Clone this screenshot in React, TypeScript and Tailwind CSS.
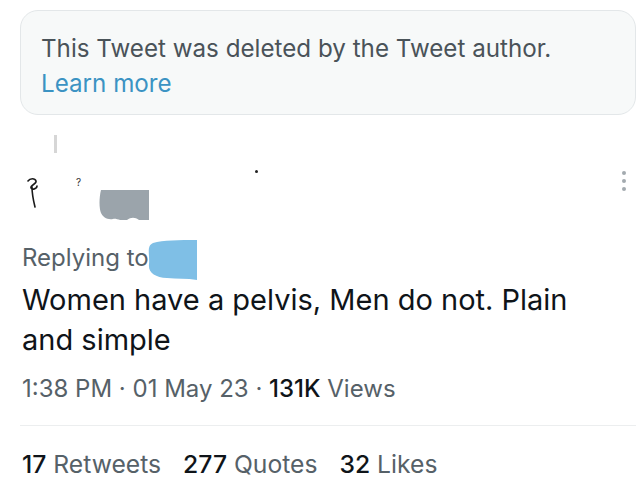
import React from 'react';

const Scribble = () => (
  <svg width="22" height="34" viewBox="0 0 22 34" fill="none" className="mt-[22px]">
    <path d="M4 6c2-3 7-3 8 0s-6 4-5 7c1 2 6 1 6-2M8 12c0 6 1 12 3 20" stroke="#1a1a1a" strokeWidth="1.6" strokeLinecap="round" />
  </svg>
);

const GrayBlob = () => (
  <svg width="50" height="30" viewBox="0 0 50 30">
    <path d="M2 0H50V30H40c-4-3-8-3-12 0-5 2-10-2-14-1-6 1-10-2-12-6C0 18 0 8 2 0Z" fill="#9ba4ab" />
  </svg>
);

const BlueBlob = () => (
  <svg width="52" height="40" viewBox="0 0 52 40" className="-ml-[4px] -mt-[2px]">
    <path d="M8 3C18 0 34 0 52 0V40C42 38 32 39 22 38 10 37 3 33 4 24 5 15 1 6 8 3Z" fill="#7fbfe6" />
  </svg>
);

export default function App() {
  return (
    <div className="w-[640px] h-[486px] overflow-hidden bg-white font-['Inter',sans-serif]">
      <div className="pl-5 pr-1 pt-[10px]">
        <div className="h-[105px] rounded-[18px] border border-[#e3e7e9] bg-[#f7f9f9] px-5 pt-[20px]">
          <p className="text-[24.2px] leading-[35px] text-[#4a5359]">This Tweet was deleted by the Tweet author.</p>
          <p className="text-[24.2px] leading-[35px] text-[#3b93c3]">Learn more</p>
        </div>
      </div>

      {/* redacted author row */}
      <div className="flex h-[127px] items-start pl-[24px] pr-[14px]">
        <div className="flex flex-col pt-[20px]">
          <div className="ml-[30px] h-[18px] w-[3px] bg-[#d6d6d6]" />
          <div className="flex items-start">
            <Scribble />
            <span className="ml-[30px] mt-[22px] text-[10px] text-[#333]">?</span>
            <div className="ml-[18px] mt-[37px]">
              <GrayBlob />
            </div>
            <div className="ml-[106px] mt-[17px] h-[3px] w-[3px] rounded-full bg-[#222]" />
          </div>
        </div>
        <div className="ml-auto mt-[56px] flex flex-col gap-[4px]">
          <span className="h-[4px] w-[4px] rounded-full bg-[#a3aaaf]" />
          <span className="h-[4px] w-[4px] rounded-full bg-[#a3aaaf]" />
          <span className="h-[4px] w-[4px] rounded-full bg-[#a3aaaf]" />
        </div>
      </div>

      <div className="px-[22px]">
        <div className="flex items-start">
          <span className="text-[24px] leading-[32px] text-[#566168]">Replying to</span>
          <BlueBlob />
        </div>
        <p className="mt-0 text-[29px] leading-[40px] text-[#0f1419]">
          Women have a pelvis, Men do not. Plain and simple
        </p>
        <p className="mt-[13px] text-[24px] leading-[32px] text-[#566168]">
          1:38 PM · 01 May 23 · <span className="font-medium text-[#0f1419]">131K</span> Views
        </p>
      </div>

      <div className="ml-5 mr-1 mt-[20px] border-t border-[#eceeef]" />

      <div className="flex gap-[22px] px-[22px] pt-[22px] text-[24.7px] leading-[32px] text-[#566168]">
        <span><span className="font-medium text-[#0f1419]">17</span> Retweets</span>
        <span><span className="font-medium text-[#0f1419]">277</span> Quotes</span>
        <span><span className="font-medium text-[#0f1419]">32</span> Likes</span>
      </div>
    </div>
  );
}
